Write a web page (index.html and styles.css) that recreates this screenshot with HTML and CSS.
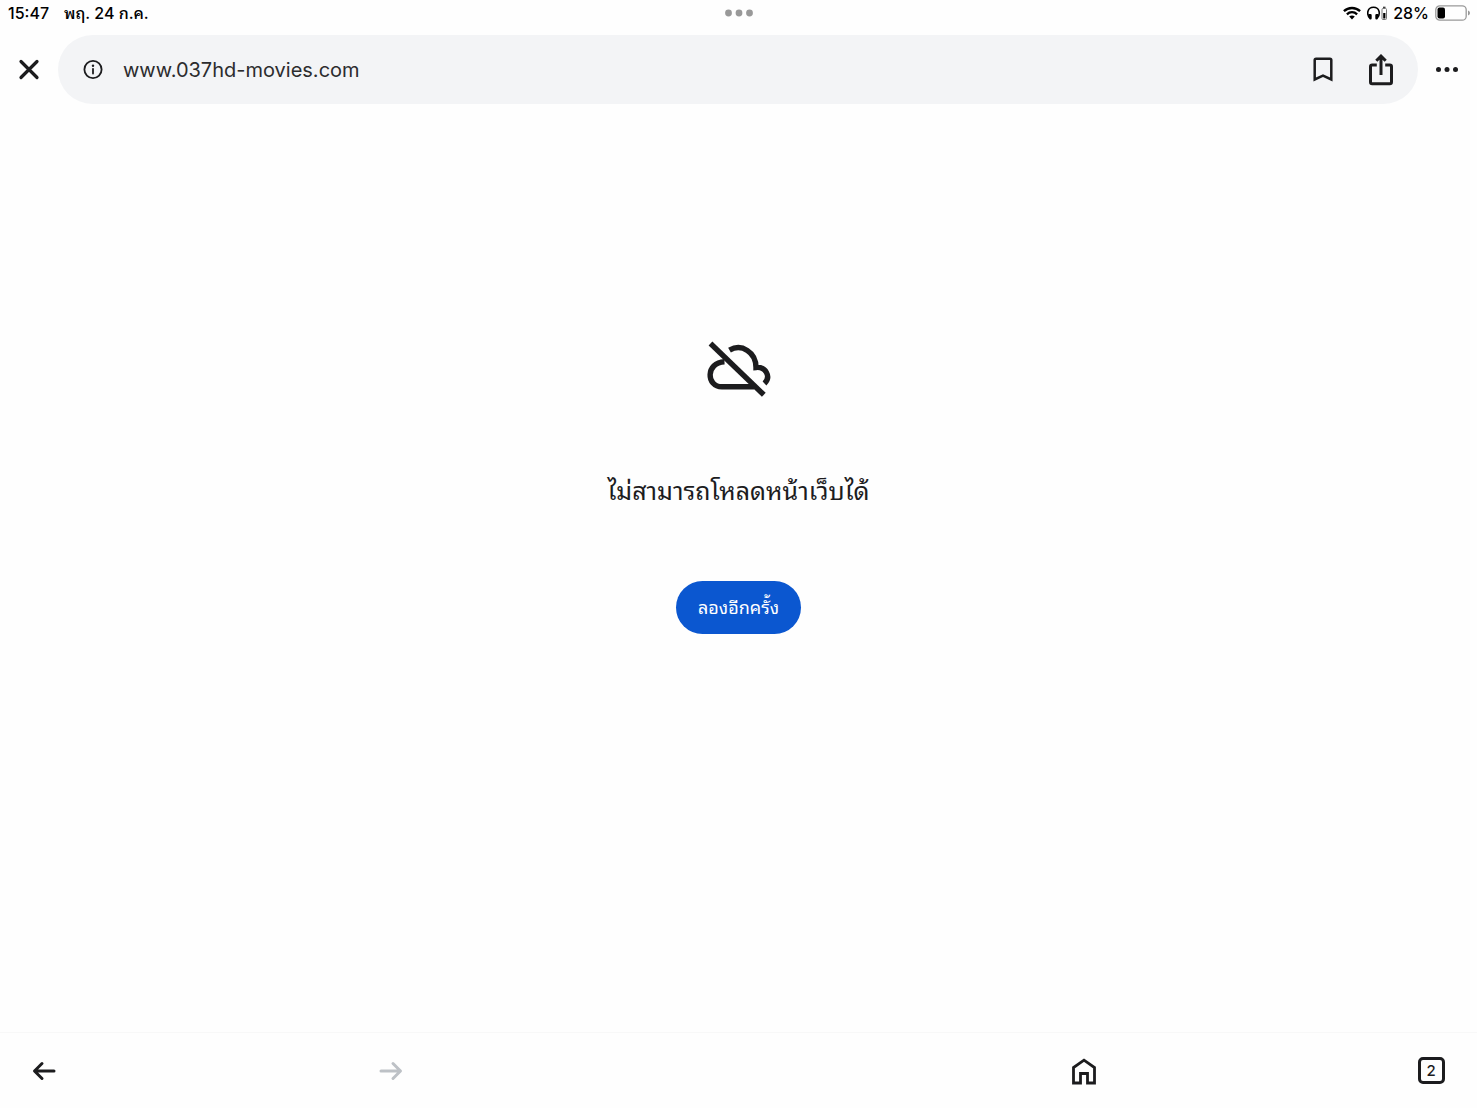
FILE: index.html
```html
<!DOCTYPE html>
<html lang="th">
<head>
  <meta charset="UTF-8">
  <meta name="viewport" content="width=device-width, initial-scale=1">
  <title>www.037hd-movies.com</title>
  <link rel="stylesheet" href="styles.css">
</head>
<body>

  <div class="status-bar">
    <div class="status-left">
      <span>15:47</span>
      <span>พฤ. 24 ก.ค.</span>
    </div>
    <svg class="multitask" width="28" height="8" viewBox="0 0 28 8" aria-hidden="true">
      <circle cx="3.5" cy="4" r="3.4"/><circle cx="14" cy="4" r="3.4"/><circle cx="24.5" cy="4" r="3.4"/>
    </svg>
    <div class="status-right">
      <svg width="18" height="14" viewBox="0 0 18 14" fill="none" stroke="#000" stroke-width="2.3" aria-hidden="true">
        <path d="M.9 5.2C5.4.9 12.6.9 17.1 5.2"/>
        <path d="M3.9 8.3C6.8 5.5 11.2 5.5 14.1 8.3"/>
        <path d="M9 13.5 6.2 10.6C7.8 9.1 10.2 9.1 11.8 10.6z" fill="#000" stroke="none"/>
      </svg>
      <svg width="20" height="14" viewBox="0 0 20 14" aria-hidden="true">
        <path d="M3 12.5C-1 8 .5 1.3 6.5 1.3S14 8 10 12.5" fill="none" stroke="#000" stroke-width="1.6"/>
        <path d="M1.500 8H3.500q1.200 0 1.200 1.200v3q0 1.200-1.200 1.200H2.700zM11.500 8H9.500q-1.200 0-1.200 1.200v3q0 1.200 1.200 1.200h.8z"/>
        <rect x="15" y="2.5" width="4.5" height="11" rx="1" fill="none" stroke="#777"/>
        <path d="M16 .8h2.500v1H16zM16.200 7h2.200v5.500h-2.200z"/>
      </svg>
      <span>28%</span>
      <svg width="35" height="16" viewBox="0 0 35 16" aria-hidden="true">
        <rect x=".8" y=".8" width="30.4" height="14.4" rx="4" fill="none" stroke="#999" stroke-width="1.3"/>
        <rect x="2.5" y="2.5" width="7.5" height="11" rx="2"/>
        <path d="M33 5.5q2 .8 2 2.5t-2 2.5z" fill="#999"/>
      </svg>
    </div>
  </div>

  <header class="toolbar">
    <button class="icon-btn" aria-label="ปิด">
      <svg width="24" height="24" viewBox="0 0 24 24" stroke-width="3.2">
        <path d="M4 3.500l16 16M20 3.500l-16 16"/>
      </svg>
    </button>
    <div class="address-bar">
      <button class="icon-btn" aria-label="ข้อมูลเว็บไซต์">
        <svg width="24" height="24" viewBox="0 0 24 24" stroke-width="1.8">
          <circle cx="12" cy="11.5" r="8.6"/>
          <path d="M12 10.800v4.700"/>
          <circle cx="12" cy="7.8" r="1.2" fill="#1c1c1e" stroke="none"/>
        </svg>
      </button>
      <input class="url" type="text" value="www.037hd-movies.com" aria-label="ที่อยู่เว็บ">
      <button class="icon-btn" aria-label="บุ๊กมาร์ก">
        <svg width="24" height="32" viewBox="0 0 24 32" stroke-width="2.5">
          <path class="flat" d="M3.700 25.500V6.100Q3.700 4.700 5.100 4.700H18.900Q20.300 4.700 20.300 6.100V25.500L12 21.700z"/>
        </svg>
      </button>
      <button class="icon-btn share" aria-label="แชร์">
        <svg width="26" height="32" viewBox="0 0 26 32" stroke-width="3">
          <path class="flat" d="M8.800 11H4.200Q2.500 11 2.500 12.700V28Q2.500 29.700 4.200 29.700H21.800Q23.500 29.700 23.500 28V12.700Q23.500 11 21.800 11H17.200"/>
          <path class="flat" d="M13 21V3M8.300 6.800 13 2.100l4.700 4.700"/>
        </svg>
      </button>
    </div>
    <button class="icon-btn" aria-label="เมนูเพิ่มเติม">
      <svg class="solid" width="24" height="24" viewBox="0 0 24 24">
        <circle cx="3.5" cy="11.5" r="2.5"/><circle cx="12" cy="11.5" r="2.5"/><circle cx="20.5" cy="11.5" r="2.5"/>
      </svg>
    </button>
  </header>

  <main class="error-page">
    <svg class="cloud" width="64" height="56" viewBox="0 0 64 56" aria-hidden="true">
      <path d="M22.500 9.200C34.500 2.200 49 11 49 26.500C58.500 25.500 64.500 35.500 57.500 42.500"/>
      <path d="M17.500 20.800C-1.500 21.500-1 45.800 15 45.800H47"/>
      <path d="M3.500 2.500 56.800 53.800"/>
    </svg>
    <h1>ไม่สามารถโหลดหน้าเว็บได้</h1>
    <button class="retry">ลองอีกครั้ง</button>
  </main>

  <nav class="bottom-bar">
    <button class="icon-btn" aria-label="ย้อนกลับ">
      <svg width="28" height="28" viewBox="0 0 28 28" stroke-width="3">
        <path d="M24 14H5M12 6.500 4.500 14l7.500 7.500"/>
      </svg>
    </button>
    <button class="icon-btn" aria-label="ไปข้างหน้า" disabled>
      <svg width="28" height="28" viewBox="0 0 28 28" stroke-width="3">
        <path d="M4 14h19M16 6.500l7.500 7.500-7.500 7.500"/>
      </svg>
    </button>
    <button class="icon-btn home" aria-label="หน้าแรก">
      <svg width="28" height="28" viewBox="0 0 28 28" stroke-width="2.8">
        <path class="flat" d="M3.500 26V10.600L14 3.200l10.500 7.400V26H17.500V16.500H10.500V26z"/>
      </svg>
    </button>
    <button class="icon-btn" aria-label="2 แท็บ"><span class="tab-count">2</span></button>
  </nav>

</body>
</html>
```

FILE: styles.css
```css
* {
  box-sizing: border-box;
}

body {
  margin: 0;
  min-height: 100vh;
  display: flex;
  flex-direction: column;
  background: #fefefe;
  color: #1c1c1e;
  font-family: Inter, Thonburi, "Noto Sans Thai Looped", Loma, "Noto Sans", sans-serif;
}

button {
  border: none;
  background: none;
  padding: 0;
  font-family: inherit;
  cursor: pointer;
}

svg {
  display: block;
}

.status-bar {
  display: grid;
  grid-template-columns: 1fr auto 1fr;
  align-items: center;
  height: 26px;
  padding: 0 7px 0 8px;
  color: #000;
  font-size: 16px;
  line-height: 20px;
  font-weight: 500;
}

.status-left {
  display: flex;
  gap: 15px;
}

.status-right {
  display: flex;
  align-items: center;
  justify-content: flex-end;
  gap: 6px;
}

.multitask {
  fill: #999;
}

/* address bar row */
.toolbar {
  display: flex;
  align-items: center;
  gap: 17px;
  padding: 9px 18px 8px 17px;
}

.icon-btn {
  display: flex;
  align-items: center;
  justify-content: center;
  flex: none;
}

.icon-btn svg {
  fill: none;
  stroke: #1c1c1e;
  stroke-linecap: round;
  stroke-linejoin: round;
}

.icon-btn .flat {
  stroke-linecap: butt;
  stroke-linejoin: miter;
}

.icon-btn svg.solid {
  fill: #1c1c1e;
  stroke: none;
}

.address-bar {
  flex: 1;
  min-width: 0;
  display: flex;
  align-items: center;
  height: 69px;
  padding: 0 24px 0 23px;
  border-radius: 35px;
  background: #f3f4f6;
}

.url {
  flex: 1;
  min-width: 0;
  margin: 0 18px;
  padding: 0;
  border: none;
  outline: none;
  background: none;
  color: #2c2c2e;
  font-family: inherit;
  font-size: 20px;
  line-height: 28px;
}

.share {
  margin-left: 33px;
}

.error-page {
  flex: 1;
  display: flex;
  flex-direction: column;
  align-items: center;
  padding: 229px 16px 32px;
}

.cloud {
  fill: none;
  stroke: #1c1c1e;
  stroke-width: 5.4px;
}

.error-page h1 {
  margin: 74px 0 70px;
  font-size: 25px;
  line-height: 40px;
  font-weight: 400;
}

.retry {
  height: 53px;
  padding: 0 22px;
  border-radius: 27px;
  background: #0b57d0;
  color: #fff;
  font-size: 18px;
  line-height: 28px;
}

/* back, forward, (free slot), home, tabs */
.bottom-bar {
  display: grid;
  grid-template-columns: repeat(5, 28px);
  justify-content: space-between;
  align-items: center;
  height: 76px;
  padding: 0 32px 0 30px;
  border-top: 1px solid #f8f8f8;
}

.home {
  grid-column: 4;
}

.icon-btn:disabled svg {
  stroke: #bdc1c6;
}

.tab-count {
  display: flex;
  align-items: center;
  justify-content: center;
  width: 27px;
  height: 27px;
  border: 3px solid #1c1c1e;
  border-radius: 5px;
  color: #1c1c1e;
  font-size: 15px;
  line-height: 20px;
  font-weight: 500;
}
```
